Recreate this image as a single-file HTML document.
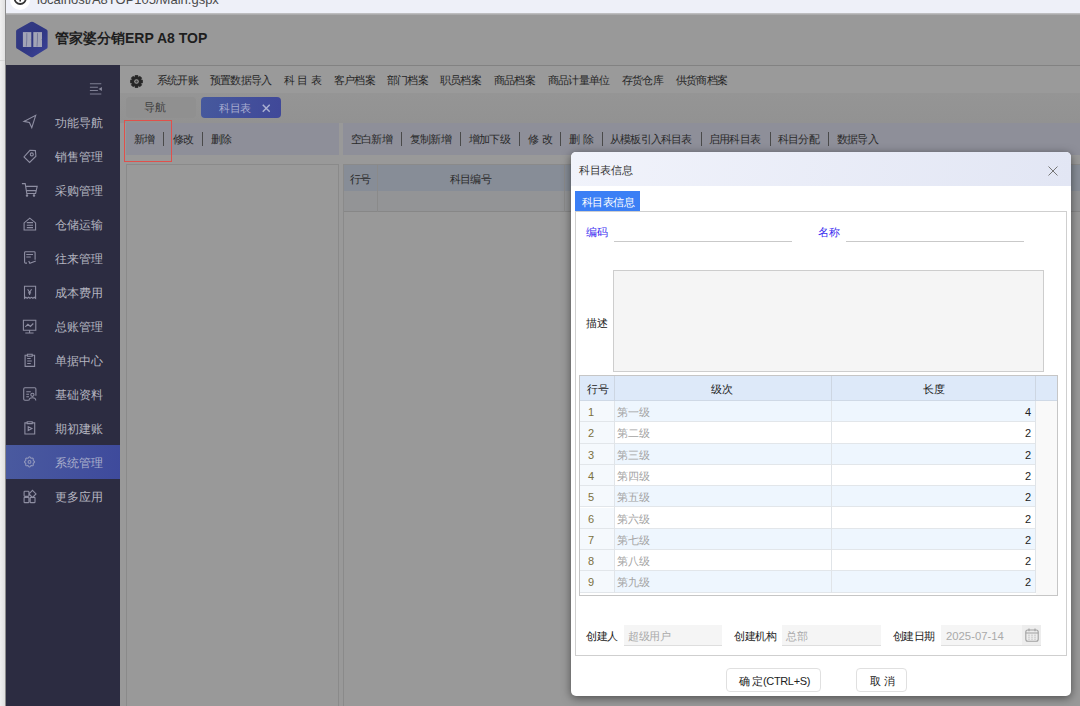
<!DOCTYPE html>
<html><head><meta charset="utf-8">
<style>
*{box-sizing:border-box;margin:0;padding:0}
html,body{width:1080px;height:706px;overflow:hidden;background:#999;font-family:"Liberation Sans",sans-serif;}
.a{position:absolute}
#bbar{left:0;top:0;width:1080px;height:15px;background:linear-gradient(#eef0f8 0,#eef0f8 12.5px,#bdbdbf 13.5px,#a3a3a3 15px)}
#lstrip{left:0;top:0;width:6px;height:706px;background:linear-gradient(90deg,#f0f0f0,#e0e0e0);border-right:1px solid #8c8c8c}
#url{left:37px;top:-9px;font-size:13px;color:#4a4a4a;white-space:nowrap;line-height:18px}
#hdr{left:6px;top:15px;width:1075px;height:51px;background:#999;border-bottom:1px solid #828282}
#title{left:55px;top:28px;font-size:14px;font-weight:bold;color:#1e1e1e;white-space:nowrap;line-height:20px}
#side{left:6px;top:65px;width:114px;height:641px;background:#2c2c41}
.si{position:absolute;left:6px;width:114px;height:34px;line-height:34px;color:#b4b5c0;font-size:12px}
.si span{position:absolute;left:49px;top:1px}
.si svg{position:absolute;left:12px;top:5px}
.sel{background:linear-gradient(100deg,#4a5a9f,#3e4a9c)}
#tb1{left:120px;top:66px;width:960px;height:27px;background:#9a9a9a}
#tb2{left:120px;top:93px;width:960px;height:30px;background:linear-gradient(#959595,#929292)}
.m{position:absolute;top:71px;letter-spacing:-.8px;font-size:11px;color:#262626;white-space:nowrap;line-height:18px}
.tab{position:absolute;top:97px;height:21px;border-radius:4px;font-size:11px;line-height:20px;text-align:center}
.panel{position:absolute;background:#8e8f99}
.tbt{position:absolute;top:131px;letter-spacing:-.8px;font-size:11px;color:#2a2a2a;line-height:16px;white-space:nowrap}
.sep{position:absolute;top:131.5px;width:1px;height:14px;background:#4a4a4a}
#modal{left:571px;top:152px;width:500px;height:544px;background:#fff;border-radius:5px;box-shadow:0 2px 10px rgba(0,0,0,.5);overflow:hidden}
.lbl{font-size:11px;line-height:16px;white-space:nowrap}
.mt{white-space:nowrap;line-height:16px}
.gt{font-size:11px;line-height:16px;white-space:nowrap}
.btn{border:1px solid #e0e0e0;border-radius:4px;background:#fff;font-size:11px;line-height:24px;letter-spacing:-.35px;padding-left:2px;text-align:center;color:#222;white-space:nowrap}
</style></head><body>
<div class="a" id="bbar"></div>
<div class="a" id="url">localhost/A8TOP105/Main.gspx</div>
<div class="a" style="left:10px;top:-10px;width:20px;height:20px;border-radius:50%;background:#fff"></div>
<svg class="a" style="left:10px;top:-10px" width="20" height="20" viewBox="0 0 20 20"><circle cx="10.2" cy="8.4" r="5.6" fill="none" stroke="#333" stroke-width="1.8"/><path d="M10.2 8.5V11.6" stroke="#333" stroke-width="1.6"/></svg>
<div class="a" id="lstrip"></div><div class="a" style="left:0;top:60px;width:5px;height:1px;background:#d8d8d8"></div>
<div class="a" id="hdr"></div>
<svg class="a" style="left:16px;top:21px" width="32" height="38" viewBox="0 0 32 38">
<defs><linearGradient id="lg" x1="0" y1="0" x2="1" y2="1"><stop offset="0" stop-color="#343c84"/><stop offset=".5" stop-color="#2f3680"/><stop offset="1" stop-color="#3c449c"/></linearGradient></defs>
<path d="M14.6 1.1Q15.9 .4 17.2 1.1L30.5 8.4Q31.6 9 31.6 10.3V25.9Q31.6 27.2 30.5 27.8L17.2 35.9Q15.9 36.7 14.6 35.9L1.2 27.8Q.1 27.2 .1 25.9V10.3Q.1 9 1.2 8.4Z" fill="url(#lg)"/>
<rect x="6.9" y="11.1" width="8.4" height="14.9" fill="#a2a4b6"/><rect x="17.3" y="11.1" width="8.7" height="14.9" fill="#a2a4b6"/>
<path d="M10.8 12.2Q11 19 10.3 25.6M21.5 12.2Q21.6 19 21 25.6M14.8 18.6H15.3M25.5 18.6H26" stroke="#565a88" stroke-width="0.6" fill="none"/>
</svg>
<div class="a" id="title">管家婆分销ERP A8 TOP</div>

<div class="a" id="side"></div>
<svg class="a" style="left:89px;top:83px" width="14" height="12" viewBox="0 0 14 12"><path d="M.9 .8H12.3M.9 4.3H8.9M.9 7.5H8.9M.9 11H12.3" stroke="#7e7f93" stroke-width="1.1"/><path d="M9.6 5.9L12.9 4V8Z" fill="#8a8a9c"/></svg>
<div class="si" style="top:105px"><svg width="24" height="24" viewBox="0 0 24 24" fill="none" stroke="#8e8ea2" stroke-width="1.1"><path d="M6 11.4L17.7 5.3 13.8 17.7 11.4 12.4Z"/></svg><span>功能导航</span></div>
<div class="si" style="top:139px"><svg width="24" height="24" viewBox="0 0 24 24" fill="none" stroke="#8e8ea2" stroke-width="1.1"><path d="M11.9 6.3L17.4 6.6 17.9 12.2 11.6 18.4 6 12.9Z"/><circle cx="13.8" cy="10.4" r="1.5"/></svg><span>销售管理</span></div>
<div class="si" style="top:173px"><svg width="24" height="24" viewBox="0 0 24 24" fill="none" stroke="#8e8ea2" stroke-width="1.1"><path d="M3.9 5.6H7.2L8.8 15.5H17.6L19.2 8.4H7.6M8.3 12.6H18.2"/><circle cx="9" cy="17.6" r=".7" fill="#8e8ea2"/><circle cx="16" cy="17.6" r=".7" fill="#8e8ea2"/></svg><span>采购管理</span></div>
<div class="si" style="top:207px"><svg width="24" height="24" viewBox="0 0 24 24" fill="none" stroke="#8e8ea2" stroke-width="1.1"><path d="M6.1 18V10.9L11.8 6.1 17.6 10.9V18ZM8.8 10.6H15M8.8 13.2H15M8.8 15.6H15"/></svg><span>仓储运输</span></div>
<div class="si" style="top:241px"><svg width="24" height="24" viewBox="0 0 24 24" fill="none" stroke="#8e8ea2" stroke-width="1.1"><path d="M9 17.1H7.5Q6.6 17.1 6.6 16.2V6.6Q6.6 5.7 7.5 5.7H16.2Q17.1 5.7 17.1 6.6V13.8M8.3 8.5H15M8.3 11H12.8M10.7 14.9L11.8 17.2 17.8 15.1"/></svg><span>往来管理</span></div>
<div class="si" style="top:275px"><svg width="24" height="24" viewBox="0 0 24 24" fill="none" stroke="#8e8ea2" stroke-width="1.1"><path d="M6.5 18.3V6.3H17.6V18.3L16.3 17.3 14.9 18.3 13.5 17.3 12 18.3 10.6 17.3 9.2 18.3 7.8 17.3ZM9.6 9.2L11.6 12.2 13.6 9.2M11.6 12.2V15M10.1 12.9H13.1"/></svg><span>成本费用</span></div>
<div class="si" style="top:309px"><svg width="24" height="24" viewBox="0 0 24 24" fill="none" stroke="#8e8ea2" stroke-width="1.1"><path d="M5.4 6.2H17.8V16.2H5.4ZM11.6 16.2V18.6M7.3 19H15.6M7.3 12.8L9.9 10.3 12.4 12.5 15.3 9.5"/></svg><span>总账管理</span></div>
<div class="si" style="top:343px"><svg width="24" height="24" viewBox="0 0 24 24" fill="none" stroke="#8e8ea2" stroke-width="1.1"><path d="M9.4 7.2H7.1V18.4H16.6V7.2H14.2M9.4 6.3H14.2V8.2H9.4ZM9.2 10.5H12.7M9.2 13H13.8M9.2 15.5H12.8"/></svg><span>单据中心</span></div>
<div class="si" style="top:377px"><svg width="24" height="24" viewBox="0 0 24 24" fill="none" stroke="#8e8ea2" stroke-width="1.1"><path d="M10.5 18.2H6.9Q5.7 18.2 5.7 17V7Q5.7 5.8 6.9 5.8H16.7Q17.9 5.8 17.9 7V13.8M8.3 9.7H12.8M8.3 12.3H11M8.3 14.7H11M11 18.6Q11 15.7 14.4 15.7 17.8 15.7 17.8 18.6"/><circle cx="14.4" cy="12.8" r="1.6"/></svg><span>基础资料</span></div>
<div class="si" style="top:411px"><svg width="24" height="24" viewBox="0 0 24 24" fill="none" stroke="#8e8ea2" stroke-width="1.1"><path d="M9.2 6.9H6.9V18H16.7V6.9H14.2M9.2 5.8H14.2V7.6H9.2ZM10.2 10.7L13.9 12.6 10.2 14.6Z"/></svg><span>期初建账</span></div>
<div class="si sel" style="top:445px;color:#a9aecb"><svg width="24" height="24" viewBox="0 0 24 24" fill="none" stroke="#9096bc" stroke-width="1.1"><path d="M11.50 6.85 L11.83 6.93 L12.13 7.14 L12.39 7.44 L12.61 7.75 L12.82 8.00 L13.05 8.16 L13.32 8.21 L13.65 8.18 L14.03 8.12 L14.42 8.09 L14.79 8.15 L15.07 8.33 L15.25 8.61 L15.31 8.98 L15.28 9.37 L15.22 9.75 L15.19 10.08 L15.24 10.35 L15.40 10.58 L15.65 10.79 L15.96 11.01 L16.26 11.27 L16.47 11.57 L16.55 11.90 L16.47 12.23 L16.26 12.53 L15.96 12.79 L15.65 13.01 L15.40 13.22 L15.24 13.45 L15.19 13.72 L15.22 14.05 L15.28 14.43 L15.31 14.82 L15.25 15.19 L15.07 15.47 L14.79 15.65 L14.42 15.71 L14.03 15.68 L13.65 15.62 L13.32 15.59 L13.05 15.64 L12.82 15.80 L12.61 16.05 L12.39 16.36 L12.13 16.66 L11.83 16.87 L11.50 16.95 L11.17 16.87 L10.87 16.66 L10.61 16.36 L10.39 16.05 L10.18 15.80 L9.95 15.64 L9.68 15.59 L9.35 15.62 L8.97 15.68 L8.58 15.71 L8.21 15.65 L7.93 15.47 L7.75 15.19 L7.69 14.82 L7.72 14.43 L7.78 14.05 L7.81 13.72 L7.76 13.45 L7.60 13.22 L7.35 13.01 L7.04 12.79 L6.74 12.53 L6.53 12.23 L6.45 11.90 L6.53 11.57 L6.74 11.27 L7.04 11.01 L7.35 10.79 L7.60 10.58 L7.76 10.35 L7.81 10.08 L7.78 9.75 L7.72 9.37 L7.69 8.98 L7.75 8.61 L7.93 8.33 L8.21 8.15 L8.58 8.09 L8.97 8.12 L9.35 8.18 L9.68 8.21 L9.95 8.16 L10.18 8.00 L10.39 7.75 L10.61 7.44 L10.87 7.14 L11.17 6.93Z"/><circle cx="11.5" cy="11.9" r="1.4"/></svg><span>系统管理</span></div>
<div class="si" style="top:479px"><svg width="24" height="24" viewBox="0 0 24 24" fill="none" stroke="#8e8ea2" stroke-width="1.1"><path d="M6.8 7.3H10.2Q10.9 7.3 10.9 8V11.5Q10.9 12.2 10.2 12.2H6.8Q6.1 12.2 6.1 11.5V8Q6.1 7.3 6.8 7.3ZM6.8 13.4H10.2Q10.9 13.4 10.9 14.1V17.9Q10.9 18.6 10.2 18.6H6.8Q6.1 18.6 6.1 17.9V14.1Q6.1 13.4 6.8 13.4ZM12.9 13.4H16.3Q17 13.4 17 14.1V17.9Q17 18.6 16.3 18.6H12.9Q12.2 18.6 12.2 17.9V14.1Q12.2 13.4 12.9 13.4ZM14.5 6.4L18 9.9 14.5 13.4 11 9.9Z"/></svg><span>更多应用</span></div>

<div class="a" id="tb1"></div>
<div class="a" id="tb2"></div>
<svg class="a" style="left:130px;top:75px" width="13" height="13" viewBox="0 0 13 13"><path d="M12.65 5.13 L12.65 7.87 L10.90 8.16 L10.78 8.44 L11.82 9.88 L9.88 11.82 L8.44 10.78 L8.16 10.90 L7.87 12.65 L5.13 12.65 L4.84 10.90 L4.56 10.78 L3.12 11.82 L1.18 9.88 L2.22 8.44 L2.10 8.16 L0.35 7.87 L0.35 5.13 L2.10 4.84 L2.22 4.56 L1.18 3.12 L3.12 1.18 L4.56 2.22 L4.84 2.10 L5.13 0.35 L7.87 0.35 L8.16 2.10 L8.44 2.22 L9.88 1.18 L11.82 3.12 L10.78 4.56 L10.90 4.84Z" fill="#262626" stroke="#262626" stroke-width=".6" stroke-linejoin="round"/><circle cx="6.5" cy="6.5" r="2.3" fill="#9a9a9a"/><circle cx="6.5" cy="6.5" r="1.2" fill="#444"/></svg>
<div class="m" style="left:157px">系统开账</div>
<div class="m" style="left:210px">预置数据导入</div>
<div class="m" style="left:284px;letter-spacing:-.3px">科&nbsp;目&nbsp;表</div>
<div class="m" style="left:334px">客户档案</div>
<div class="m" style="left:387px">部门档案</div>
<div class="m" style="left:440px">职员档案</div>
<div class="m" style="left:494px">商品档案</div>
<div class="m" style="left:548px">商品计量单位</div>
<div class="m" style="left:622px">存货仓库</div>
<div class="m" style="left:676px">供货商档案</div>

<div class="tab" style="left:126px;width:70px;background:#909090;color:#3d3d3d;text-align:left;padding-left:18px;letter-spacing:-.5px">导航</div>
<div class="tab" style="left:201px;width:80px;background:linear-gradient(100deg,#46599d,#404899);color:#a7acd0;text-align:left;padding-left:18px;letter-spacing:-.3px;line-height:22px">科目表<svg style="position:absolute;left:60.5px;top:7px" width="8.5" height="8.5" viewBox="0 0 9 9"><path d="M.8 .8L8.2 8.2M8.2 .8L.8 8.2" stroke="#aab0d2" stroke-width="1.6"/></svg></div>

<div class="panel" style="left:126px;top:123px;width:213px;height:32px"></div>
<div class="panel" style="left:343px;top:123px;width:737px;height:32px"></div>
<div class="tbt" style="left:134px">新增</div><div class="sep" style="left:163px"></div>
<div class="tbt" style="left:173px">修改</div><div class="sep" style="left:202px"></div>
<div class="tbt" style="left:211px">删除</div>
<div class="a" style="left:124px;top:120px;width:48px;height:42px;border:1px solid #e0504c"></div>

<div class="tbt" style="left:351px">空白新增</div><div class="sep" style="left:401px"></div>
<div class="tbt" style="left:410px">复制新增</div><div class="sep" style="left:460px"></div>
<div class="tbt" style="left:469px">增加下级</div><div class="sep" style="left:519px"></div>
<div class="tbt" style="left:528px;letter-spacing:0">修&nbsp;改</div><div class="sep" style="left:560px"></div>
<div class="tbt" style="left:569px;letter-spacing:0">删&nbsp;除</div><div class="sep" style="left:602px"></div>
<div class="tbt" style="left:610px">从模板引入科目表</div><div class="sep" style="left:701px"></div>
<div class="tbt" style="left:709px">启用科目表</div><div class="sep" style="left:770px"></div>
<div class="tbt" style="left:778px">科目分配</div><div class="sep" style="left:828px"></div>
<div class="tbt" style="left:837px">数据导入</div>

<div class="a" style="left:126px;top:164px;width:213px;height:542px;border:1px solid #8a8a8a;border-bottom:none"></div>
<div class="a" style="left:343px;top:164px;width:737px;height:542px;border-left:1px solid #8a8a8a;border-top:1px solid #8a8a8a"></div>
<div class="a" style="left:344px;top:165px;width:736px;height:26px;background:#878d97"></div>
<div class="a" style="left:344px;top:191px;width:736px;height:21px;background:#939496;border-bottom:1px solid #878787"></div>
<div class="a" style="left:377px;top:165px;width:1px;height:47px;background:#8a8a8a"></div>
<div class="a" style="left:564px;top:165px;width:1px;height:47px;background:#8a8a8a"></div>
<div class="tbt" style="left:350px;top:171px">行号</div>
<div class="tbt" style="left:450px;top:171px">科目编号</div>

<div class="a" id="modal">
<div class="a" style="left:0;top:0;width:500px;height:34px;background:linear-gradient(100deg,#f1f3fb,#e2e6f4)"></div>
<div class="a mt" style="left:8px;top:10px;font-size:11px;color:#333;letter-spacing:-.3px">科目表信息</div>
<svg class="a" style="left:477px;top:14px" width="10" height="10" viewBox="0 0 10 10"><path d="M.5 .5L9.5 9.5M9.5 .5L.5 9.5" stroke="#767676" stroke-width="1"/></svg>
<div class="a" style="left:4px;top:39px;width:65px;height:20px;background:#3b7ff5;color:#fff;font-size:11px;line-height:22px;text-align:center;letter-spacing:-.6px;padding-left:1px">科目表信息</div>
<div class="a" style="left:4px;top:59px;width:492px;height:445px;border:1px solid #cfcfcf"></div>
<div class="a lbl" style="left:15px;top:72px;color:#3a2ef0">编码</div>
<div class="a" style="left:43px;top:89px;width:178px;height:1px;background:#c9c9c9"></div>
<div class="a lbl" style="left:247px;top:72px;color:#3a2ef0">名称</div>
<div class="a" style="left:275px;top:89px;width:178px;height:1px;background:#c9c9c9"></div>
<div class="a lbl" style="left:15px;top:163px;color:#222">描述</div>
<div class="a" style="left:42px;top:118px;width:431px;height:102px;background:#f5f5f5;border:1px solid #cdcdcd"></div>
<div class="a lbl" style="left:15px;top:476px;color:#222;letter-spacing:-.5px">创建人</div>
<div class="a" style="left:53px;top:473px;width:98px;height:21px;background:#f5f5f5;border-bottom:1px solid #dedede"></div>
<div class="a lbl" style="left:57px;top:476px;color:#aaa;letter-spacing:-.5px">超级用户</div>
<div class="a lbl" style="left:163px;top:476px;color:#222;letter-spacing:-.5px">创建机构</div>
<div class="a" style="left:211px;top:473px;width:99px;height:21px;background:#f5f5f5;border-bottom:1px solid #dedede"></div>
<div class="a lbl" style="left:215px;top:476px;color:#aaa;letter-spacing:-.5px">总部</div>
<div class="a lbl" style="left:322px;top:476px;color:#222;letter-spacing:-.7px">创建日期</div>
<div class="a" style="left:370px;top:473px;width:100px;height:21px;background:#f5f5f5;border-bottom:1px solid #dedede"></div>
<div class="a" style="left:451px;top:473px;width:19px;height:21px;background:#ededed;border-bottom:1px solid #dedede"></div>
<div class="a lbl" style="left:375px;top:476px;color:#aaa;font-size:11.3px">2025-07-14</div>
<svg class="a" style="left:454px;top:476px" width="14" height="14" viewBox="0 0 14 14"><rect x=".8" y="2" width="12.4" height="11.2" rx="2" fill="none" stroke="#a0a0a0" stroke-width="1.1"/><path d="M.8 5H13.2M4 .6V3.2M10 .6V3.2" stroke="#a0a0a0" stroke-width="1.1"/><path d="M3.5 7.2h1M6.5 7.2h1M9.5 7.2h1M3.5 9.2h1M6.5 9.2h1M9.5 9.2h1M3.5 11.2h1M6.5 11.2h1M9.5 11.2h1" stroke="#a8a8a8" stroke-width="1"/></svg>
<div class="a btn" style="left:155px;top:516px;width:95px;height:24px">确&nbsp;定(CTRL+S)</div>
<div class="a btn" style="left:285px;top:516px;width:51px;height:24px">取&nbsp;消</div>
<div class="a" style="left:8px;top:223px;width:479px;height:221px;border:1px solid #c6c6c6;background:#fff;overflow:hidden" id="grid"><div class="a" style="left:0;top:0;width:477px;height:25px;background:#dde9f9;border-bottom:1px solid #cfd9e6"></div><div class="a" style="left:34px;top:0;width:1px;height:25px;background:#cdd6e2"></div><div class="a" style="left:251px;top:0;width:1px;height:25px;background:#cdd6e2"></div><div class="a" style="left:455px;top:0;width:1px;height:25px;background:#cdd6e2"></div><div class="a gt" style="left:7px;top:5px;color:#222">行号</div><div class="a gt" style="left:131px;top:5px;color:#222">级次</div><div class="a gt" style="left:343px;top:5px;color:#222">长度</div><div class="a" style="left:456px;top:25px;width:21px;height:200px;background:#f9f9f9"></div><div class="a" style="left:0;top:25.20px;width:456px;height:21.26px;background:#eef6fe;border-bottom:1px solid #e2e6ea"></div><div class="a" style="left:0;top:25.20px;width:34px;height:21.26px;background:#f5f9fd;border-bottom:1px solid #e2e6ea"></div><div class="a gt" style="left:8px;top:28.0px;color:#7a7040">1</div><div class="a gt" style="left:37px;top:28.0px;color:#a3a3a3">第一级</div><div class="a gt" style="left:439px;top:28.0px;color:#222;width:12px;text-align:right">4</div><div class="a" style="left:0;top:46.46px;width:456px;height:21.26px;background:#fff;border-bottom:1px solid #e2e6ea"></div><div class="a" style="left:0;top:46.46px;width:34px;height:21.26px;background:#f5f9fd;border-bottom:1px solid #e2e6ea"></div><div class="a gt" style="left:8px;top:49.3px;color:#7a7040">2</div><div class="a gt" style="left:37px;top:49.3px;color:#a3a3a3">第二级</div><div class="a gt" style="left:439px;top:49.3px;color:#222;width:12px;text-align:right">2</div><div class="a" style="left:0;top:67.72px;width:456px;height:21.26px;background:#eef6fe;border-bottom:1px solid #e2e6ea"></div><div class="a" style="left:0;top:67.72px;width:34px;height:21.26px;background:#f5f9fd;border-bottom:1px solid #e2e6ea"></div><div class="a gt" style="left:8px;top:70.6px;color:#7a7040">3</div><div class="a gt" style="left:37px;top:70.6px;color:#a3a3a3">第三级</div><div class="a gt" style="left:439px;top:70.6px;color:#222;width:12px;text-align:right">2</div><div class="a" style="left:0;top:88.98px;width:456px;height:21.26px;background:#fff;border-bottom:1px solid #e2e6ea"></div><div class="a" style="left:0;top:88.98px;width:34px;height:21.26px;background:#f5f9fd;border-bottom:1px solid #e2e6ea"></div><div class="a gt" style="left:8px;top:91.9px;color:#7a7040">4</div><div class="a gt" style="left:37px;top:91.9px;color:#a3a3a3">第四级</div><div class="a gt" style="left:439px;top:91.9px;color:#222;width:12px;text-align:right">2</div><div class="a" style="left:0;top:110.24px;width:456px;height:21.26px;background:#eef6fe;border-bottom:1px solid #e2e6ea"></div><div class="a" style="left:0;top:110.24px;width:34px;height:21.26px;background:#f5f9fd;border-bottom:1px solid #e2e6ea"></div><div class="a gt" style="left:8px;top:113.2px;color:#7a7040">5</div><div class="a gt" style="left:37px;top:113.2px;color:#a3a3a3">第五级</div><div class="a gt" style="left:439px;top:113.2px;color:#222;width:12px;text-align:right">2</div><div class="a" style="left:0;top:131.50px;width:456px;height:21.26px;background:#fff;border-bottom:1px solid #e2e6ea"></div><div class="a" style="left:0;top:131.50px;width:34px;height:21.26px;background:#f5f9fd;border-bottom:1px solid #e2e6ea"></div><div class="a gt" style="left:8px;top:134.5px;color:#7a7040">6</div><div class="a gt" style="left:37px;top:134.5px;color:#a3a3a3">第六级</div><div class="a gt" style="left:439px;top:134.5px;color:#222;width:12px;text-align:right">2</div><div class="a" style="left:0;top:152.76px;width:456px;height:21.26px;background:#eef6fe;border-bottom:1px solid #e2e6ea"></div><div class="a" style="left:0;top:152.76px;width:34px;height:21.26px;background:#f5f9fd;border-bottom:1px solid #e2e6ea"></div><div class="a gt" style="left:8px;top:155.8px;color:#7a7040">7</div><div class="a gt" style="left:37px;top:155.8px;color:#a3a3a3">第七级</div><div class="a gt" style="left:439px;top:155.8px;color:#222;width:12px;text-align:right">2</div><div class="a" style="left:0;top:174.02px;width:456px;height:21.26px;background:#fff;border-bottom:1px solid #e2e6ea"></div><div class="a" style="left:0;top:174.02px;width:34px;height:21.26px;background:#f5f9fd;border-bottom:1px solid #e2e6ea"></div><div class="a gt" style="left:8px;top:177.1px;color:#7a7040">8</div><div class="a gt" style="left:37px;top:177.1px;color:#a3a3a3">第八级</div><div class="a gt" style="left:439px;top:177.1px;color:#222;width:12px;text-align:right">2</div><div class="a" style="left:0;top:195.28px;width:456px;height:21.26px;background:#eef6fe;border-bottom:1px solid #e2e6ea"></div><div class="a" style="left:0;top:195.28px;width:34px;height:21.26px;background:#f5f9fd;border-bottom:1px solid #e2e6ea"></div><div class="a gt" style="left:8px;top:198.4px;color:#7a7040">9</div><div class="a gt" style="left:37px;top:198.4px;color:#a3a3a3">第九级</div><div class="a gt" style="left:439px;top:198.4px;color:#222;width:12px;text-align:right">2</div><div class="a" style="left:34px;top:25px;width:1px;height:192px;background:#e0e4e8"></div><div class="a" style="left:251px;top:25px;width:1px;height:192px;background:#e0e4e8"></div><div class="a" style="left:455px;top:25px;width:1px;height:192px;background:#e0e4e8"></div></div>
</div>
</body></html>
